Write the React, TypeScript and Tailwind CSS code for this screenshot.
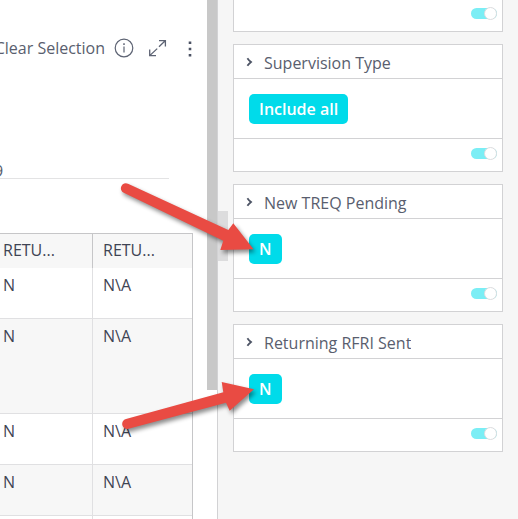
const filters = [
  { title: "Supervision Type", value: "Include all" },
  { title: "New TREQ Pending", value: "N" },
  { title: "Returning RFRI Sent", value: "N" },
];

const rows = [
  { returned: "N", reason: "N\\A", height: "h-[51px]", shade: "bg-white" },
  { returned: "N", reason: "N\\A", height: "h-[95px]", shade: "bg-[#f7f7f7]" },
  { returned: "N", reason: "N\\A", height: "h-[51px]", shade: "bg-white" },
  { returned: "N", reason: "N\\A", height: "h-[51px]", shade: "bg-[#f7f7f7]" },
  { returned: "", reason: "", height: "h-[51px]", shade: "bg-white" },
];

function Toggle({ name }: { name: string }) {
  return (
    <div className="flex h-8 items-start justify-end pt-[9px] pr-[5px]">
      <input
        type="checkbox"
        aria-label={name}
        defaultChecked
        className="flex h-[11px] w-[26px] appearance-none items-center justify-start rounded-full bg-gray-300 before:block before:size-[13px] before:shrink-0 before:rounded-full before:border before:border-[#dcdcde] before:bg-white checked:justify-end checked:bg-[#7beef5]"
      />
    </div>
  );
}

function FilterCard({ title, value }: { title: string; value: string }) {
  return (
    <section className="divide-y divide-[#d2d2d4] border border-[#d2d2d4] bg-white">
      <button type="button" className="flex h-[34px] w-full items-center gap-[11px] pt-0.5 pl-3 text-left">
        <svg viewBox="0 0 7 10" className="mb-0.5 h-[10px] w-[7px] shrink-0" fill="none" stroke="#4c5364" strokeWidth="1.8">
          <path d="M1.4 1.2 C2.8 3.2 4 4.2 5 5 C4 5.8 2.8 6.8 1.4 8.8" />
        </svg>
        <span className="truncate">{title}</span>
      </button>
      <div className="flex h-[60px] items-center px-[15px]">
        <button type="button" className="h-[30px] rounded-[5px] bg-[#00dbea] px-[10px] font-semibold text-white">
          {value}
        </button>
      </div>
      <Toggle name={`Enable ${title}`} />
    </section>
  );
}

function Arrows() {
  return (
    <svg
      width="300"
      height="519"
      viewBox="0 0 300 519"
      fill="#e94b43"
      className="pointer-events-none absolute top-0 left-0 drop-shadow-[2px_3px_2px_rgba(0,0,0,0.45)]"
      aria-hidden="true"
    >
      <path d="M128 183.7 L228.3 230 L233.3 223.3 L253.5 249.3 L220.3 250 L223.3 240.7 L123.8 192.8 A5 5 0 0 1 128 183.7 Z" />
      <path d="M126 419 L223.3 392.3 L221.7 382 L254 389.3 L229.7 410.7 L226 402.7 L128.5 428.8 A5 5 0 0 1 126 419 Z" />
    </svg>
  );
}

export default function App() {
  return (
    <div className="relative flex h-screen overflow-hidden bg-white font-['Open_Sans','Noto_Sans',sans-serif] text-base text-[#595e6e]">
      <main className="flex w-[217px] shrink-0">
        <div className="flex min-w-0 flex-1 flex-col overflow-hidden">
          <div className="flex justify-end pt-9 pr-2">
            <button type="button" className="shrink-0 whitespace-nowrap">Clear Selection</button>
            <button type="button" aria-label="Information" className="ml-[9px] shrink-0">
              <svg width="20" height="20" viewBox="0 0 20 20" fill="none" stroke="#5d6373" strokeWidth="1.2">
                <circle cx="10" cy="10" r="8.8" />
                <path d="M10 8.5 V14.5" />
                <path d="M10 5.3 V7" strokeWidth="1.5" />
              </svg>
            </button>
            <button type="button" aria-label="Expand" className="ml-[14px] shrink-0">
              <svg width="19" height="18" viewBox="0 0 19 18" fill="none" stroke="#5d6373" strokeWidth="1.3">
                <path d="M11 1.6 H17.4 V7.5 M17.2 1.8 L11 7.8 M9.2 9.6 L2 16.4 M1.7 10.6 V16.6 H8" />
              </svg>
            </button>
            <button type="button" aria-label="More options" className="ml-[14px] shrink-0 pt-px">
              <svg width="18" height="18" viewBox="0 0 18 18" fill="#4c5364">
                <path d="M7.7 1.5h2.6v2.6H7.7zM7.7 7.7h2.6v2.6H7.7zM7.7 13.9h2.6v2.6H7.7z" />
              </svg>
            </button>
          </div>
          <div className="mt-[99px] mr-[38px] h-5 border-b border-[#e3e3e4]">
            <span className="-ml-[6px] leading-6">9</span>
          </div>
          <table className="mt-[54px] mr-[14px] table-fixed border-separate border-spacing-0 border-t border-r border-[#c6c6c8] text-[#3f4454]">
            <thead>
              <tr className="h-[34px] bg-[#f7f7f7] text-left">
                <th className="w-[93px] truncate border-r border-[#c6c6c8] pb-0.5 pl-[3px] font-normal">RETU...</th>
                <th className="truncate pb-0.5 pl-[10px] font-normal">RETU...</th>
              </tr>
            </thead>
            <tbody>
              {rows.map((row, i) => (
                <tr key={i} className={`${row.height} ${row.shade} align-top`}>
                  <td className="border-r border-b border-[#e0e0e2] pt-[5px] pl-[3px]">{row.returned}</td>
                  <td className="border-b border-[#e0e0e2] pt-[5px] pl-[10px]">{row.reason}</td>
                </tr>
              ))}
            </tbody>
          </table>
        </div>
        <div className="h-[390px] w-[10px] shrink-0 bg-[#c8c8c8]" />
      </main>
      <aside className="flex min-w-0 flex-1 border-l border-[#d2d2d4] bg-[#f6f6f6]">
        <button type="button" aria-label="Collapse filters" className="mt-[211px] h-[50px] w-[10px] shrink-0 bg-[#dcdcdd]" />
        <div className="flex min-w-0 flex-1 flex-col gap-3 pr-[15px] pl-[5px]">
          <section className="h-8 shrink-0 border border-t-0 border-[#d2d2d4] bg-white">
            <div className="-mt-px">
              <Toggle name="Enable filter" />
            </div>
          </section>
          {filters.map((filter) => (
            <FilterCard key={filter.title} title={filter.title} value={filter.value} />
          ))}
        </div>
      </aside>
      <Arrows />
    </div>
  );
}
